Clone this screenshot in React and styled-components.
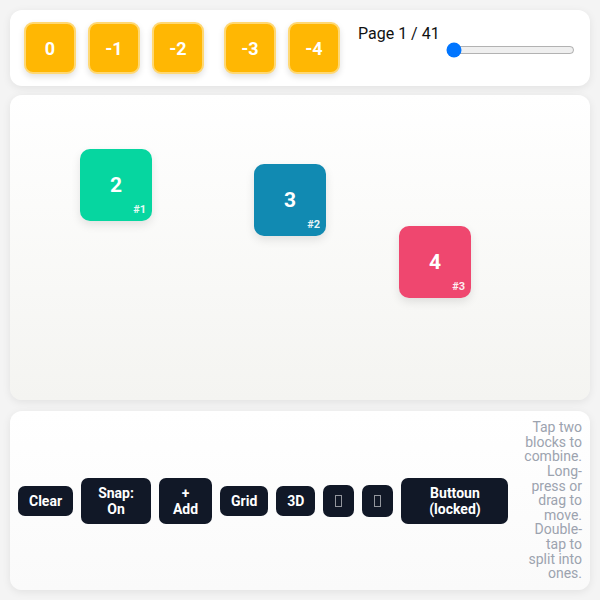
import React from "react";
import styled, { createGlobalStyle } from "styled-components";

const Global = createGlobalStyle`
  html, body { margin: 0; padding: 0; }
  body {
    background: #f4f4f4;
    font-family: Roboto, "Liberation Sans", sans-serif;
  }
`;

const Page = styled.div`
  width: 600px;
  height: 600px;
  box-sizing: border-box;
  padding: 10px;
  display: flex;
  flex-direction: column;
  gap: 9px;
`;

const Panel = styled.div`
  background: #fff;
  border-radius: 12px;
  box-shadow: 0 2px 8px rgba(0, 0, 0, 0.08);
`;

const TopBar = styled(Panel)`
  height: 76px;
  flex: 0 0 76px;
  box-sizing: border-box;
  padding: 12px 14px;
  display: flex;
  align-items: flex-start;
  gap: 12px;
`;

const StackButton = styled.button`
  width: 52px;
  height: 52px;
  flex: 0 0 52px;
  margin-left: ${(p) => (p.$spaced ? "8px" : "0")};
  border: 2px solid #ffd873;
  border-radius: 9px;
  background: #ffb703;
  color: #fff;
  font-family: Roboto, "Liberation Sans", sans-serif;
  font-weight: 700;
  font-size: 18px;
  box-shadow: 0 3px 6px rgba(0, 0, 0, 0.12);
  padding: 0;
`;

const PageInfo = styled.div`
  flex: 0 0 auto;
  margin-left: 6px;
  display: flex;
  align-items: flex-start;
  gap: 6px;
  color: #111;
  font-size: 16px;
  white-space: nowrap;
  padding-top: 2px;
`;

const Range = styled.input`
  margin: 18px 0 0 0;
  width: 129px;
`;

const Canvas = styled(Panel)`
  position: relative;
  height: 305px;
  flex: 0 0 305px;
  background: linear-gradient(180deg, #ffffff 0%, #f4f4f1 100%);
`;

const Block = styled.div`
  position: absolute;
  width: 72px;
  height: 72px;
  border-radius: 10px;
  background: ${(p) => p.$color};
  color: #fff;
  display: flex;
  align-items: center;
  justify-content: center;
  font-weight: 700;
  font-size: 21px;
  box-shadow: 0 4px 10px rgba(0, 0, 0, 0.1);
`;

const Tag = styled.span`
  position: absolute;
  right: 6px;
  bottom: 5px;
  font-size: 11px;
  font-weight: 700;
  opacity: 0.9;
`;

const Controls = styled(Panel)`
  flex: 0 0 179px;
  height: 179px;
  margin-top: 2px;
  box-sizing: border-box;
  padding: 6px 8px;
  display: flex;
  align-items: center;
  gap: 8px;
  background: linear-gradient(180deg, #ffffff 0%, #fafafa 100%);
`;

const ToolButton = styled.button`
  flex: 0 0 auto;
  width: ${(p) => (p.$w ? `${p.$w}px` : "auto")};
  border: 0;
  border-radius: 7px;
  background: #111827;
  color: #fff;
  font-family: Roboto, "Liberation Sans", sans-serif;
  font-weight: 700;
  font-size: 14px;
  line-height: 16px;
  padding: 7px 11px;
  text-align: center;
`;

/* the icon glyphs show as missing-glyph boxes in the reference */
const Tofu = styled.span`
  display: inline-block;
  width: 5px;
  height: 10px;
  margin: 3px 1px;
  border: 1px solid rgba(255, 255, 255, 0.55);
  vertical-align: top;
`;

const Help = styled.div`
  margin-left: auto;
  width: 62px;
  text-align: right;
  color: #9ca3af;
  font-size: 14px;
  line-height: 14.6px;
`;

const blocks = [
  { n: 2, id: 1, x: 70, y: 54, color: "#06d6a0" },
  { n: 3, id: 2, x: 244, y: 69, color: "#118ab2" },
  { n: 4, id: 3, x: 389, y: 131, color: "#ef476f" },
];

export default function App() {
  return (
    <>
      <Global />
      <Page>
        <TopBar>
          <StackButton>0</StackButton>
          <StackButton>-1</StackButton>
          <StackButton>-2</StackButton>
          <StackButton $spaced>-3</StackButton>
          <StackButton>-4</StackButton>
          <PageInfo>
            <span>Page 1 / 41</span>
            <Range type="range" min="1" max="41" defaultValue="1" />
          </PageInfo>
        </TopBar>

        <Canvas>
          {blocks.map((b) => (
            <Block key={b.id} $color={b.color} style={{ left: b.x, top: b.y }}>
              {b.n}
              <Tag>#{b.id}</Tag>
            </Block>
          ))}
        </Canvas>

        <Controls>
          <ToolButton>Clear</ToolButton>
          <ToolButton $w={70}>Snap: On</ToolButton>
          <ToolButton $w={53}>+ Add</ToolButton>
          <ToolButton>Grid</ToolButton>
          <ToolButton>3D</ToolButton>
          <ToolButton aria-label="sound"><Tofu /></ToolButton>
          <ToolButton aria-label="save"><Tofu /></ToolButton>
          <ToolButton $w={107}>Buttoun (locked)</ToolButton>
          <Help>
            Tap two blocks to combine. Long-press or drag to move. Double-tap to split into ones.
          </Help>
        </Controls>
      </Page>
    </>
  );
}
